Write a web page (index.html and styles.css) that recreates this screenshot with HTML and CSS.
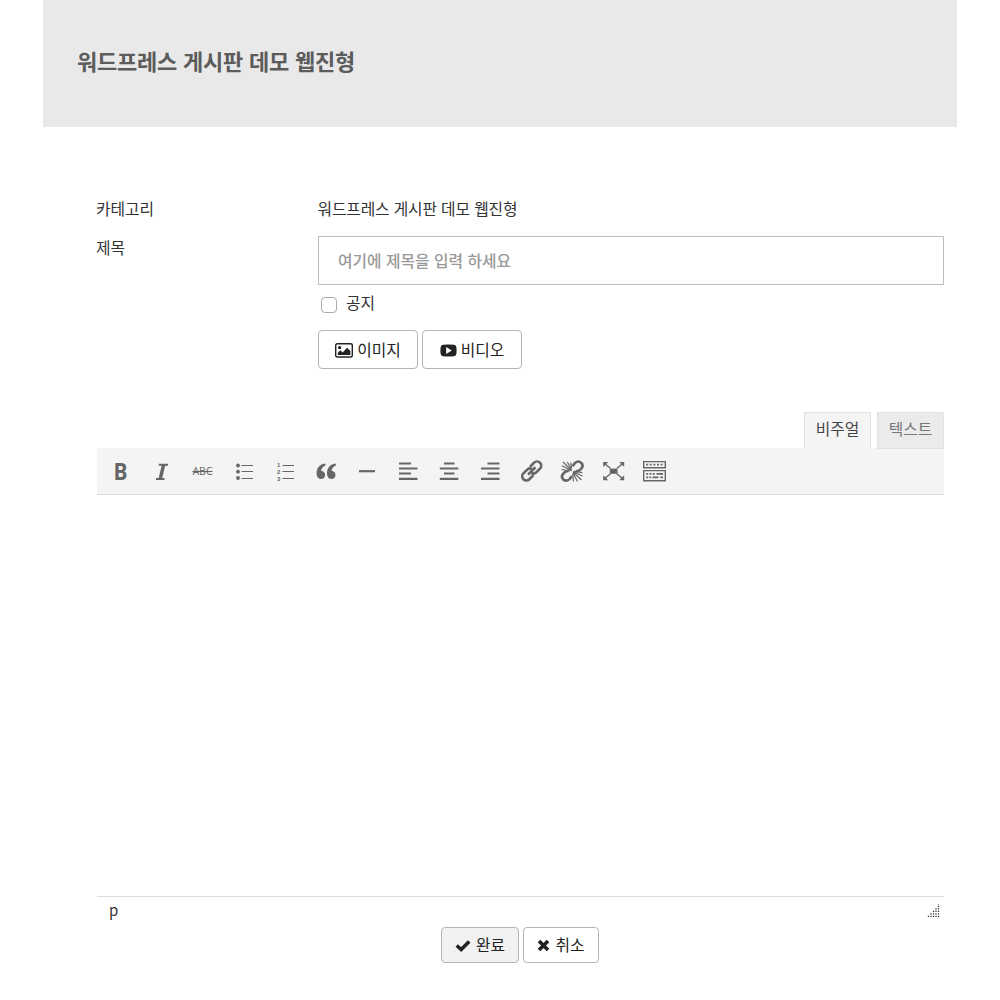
FILE: index.html
```
<!DOCTYPE html>
<html lang="ko">
<head>
<meta charset="utf-8">
<title>워드프레스 게시판 데모 웹진형</title>
<link rel="stylesheet" href="styles.css">
</head>
<body>
<header class="page-header"><h1>워드프레스 게시판 데모 웹진형</h1></header>
<main class="board">
  <div class="row category">
    <div class="label">카테고리</div>
    <div class="value">워드프레스 게시판 데모 웹진형</div>
  </div>
  <div class="row subject">
    <label class="label" for="title">제목</label>
    <div class="field">
      <input class="title-input" id="title" type="text" placeholder="여기에 제목을 입력 하세요">
      <label class="notice"><input class="check" type="checkbox"><span>공지</span></label>
      <div class="media">
        <button class="btn media-btn" type="button">
          <svg width="18" height="15" viewBox="0 0 18 15"><rect x=".7" y=".8" width="16.600" height="13.200" rx="1.500" fill="none" stroke="#222" stroke-width="1.400"/><circle cx="4.600" cy="4.600" r="1.700" fill="#222"/><path d="M2.800 12V9.800l2.600-2.500 2.200 2.100 4.500-4.600 3.300 3.300V12z" fill="#222"/></svg>
          <span>이미지</span>
        </button>
        <button class="btn media-btn video" type="button">
          <svg width="17" height="15" viewBox="0 0 17 15"><path d="M3 1.800q5.500-.7 11 0 2.200.2 2.400 2.400.4 3.300 0 6.600-.2 2.200-2.400 2.400-5.500.7-11 0Q.8 13 .6 10.800q-.4-3.300 0-6.600Q.8 2 3 1.800z" fill="#222"/><path d="M6.200 4v7l5.600-3.500z" fill="#fff"/></svg>
          <span>비디오</span>
        </button>
      </div>
    </div>
  </div>
  <section class="editor">
    <div class="tabs"><button class="tab active" type="button">비주얼</button><button class="tab" type="button">텍스트</button></div>
    <div class="toolbar">
      <svg class="tool" viewBox="0 0 26 26"><text class="bold" x="5.500" y="22" textLength="14" lengthAdjust="spacingAndGlyphs">B</text></svg>
      <svg class="tool" viewBox="0 0 26 26"><path d="M9.800 6.700h9.200M7 21h8.500" stroke="#666" stroke-width="2"/><path d="M14.700 6.500 11.200 21" stroke="#666" stroke-width="3.400"/></svg>
      <svg class="tool" viewBox="0 0 26 26"><text class="strike" x="2.500" y="17.300" textLength="20" lengthAdjust="spacingAndGlyphs">ABC</text><path class="thin" d="M2.500 13.500h20"/></svg>
      <svg class="tool" viewBox="0 0 26 26"><g fill="#666"><circle cx="7" cy="7.500" r="1.900"/><circle cx="7" cy="13.700" r="1.900"/><circle cx="7" cy="20" r="1.900"/></g><path class="thin" d="M10.500 7.500H22M10.500 13.500H22M10.500 20.500H22"/></svg>
      <svg class="tool" viewBox="0 0 26 26"><text class="nums" x="5" y="9">1</text><text class="nums" x="5" y="15.900">2</text><text class="nums" x="5" y="22.800">3</text><path class="thin" d="M10.500 7.500H22M10.500 13.500H22M10.500 20.500H22"/></svg>
      <svg class="tool" viewBox="0 0 26 26"><g fill="#666"><path d="M12.400 5.500C6.500 6.300 3.600 10 3.600 15.300c0 3.500 1.600 5.700 4.300 5.700 2.500 0 4.200-1.600 4.200-4.100 0-2.300-1.500-3.800-3.900-3.900.2-2.400 1.500-4.200 4.200-5.400z"/><path d="M22.800 5.500C16.900 6.300 14 10 14 15.300c0 3.500 1.600 5.700 4.300 5.700 2.500 0 4.200-1.600 4.200-4.100 0-2.300-1.500-3.800-3.900-3.900.2-2.400 1.500-4.200 4.200-5.400z"/></g></svg>
      <svg class="tool" viewBox="0 0 26 26"><path class="line" d="M5 13.200h16"/></svg>
      <svg class="tool" viewBox="0 0 26 26"><path class="line" d="M4 5.500h12M4 10.500h18.500M4 15.500h12M4 20.900h18.500"/></svg>
      <svg class="tool" viewBox="0 0 26 26"><path class="line" d="M8 5.500h10.500M3.800 10.500h18.500M8 15.500h10.500M3.800 20.900h18.500"/></svg>
      <svg class="tool" viewBox="0 0 26 26"><path class="line" d="M10.500 5.500h12M4 10.500h18.500M10.500 15.500h12M4 20.900h18.500"/></svg>
      <svg class="tool" viewBox="0 0 26 26"><g class="chain" transform="rotate(-45 13.700 13)"><path d="M12 17.200H6.200a4.200 4.200 0 0 1 0-8.400h5q3.500 0 4 3"/><path d="M15.400 8.800h5.800a4.200 4.200 0 0 1 0 8.400h-5q-3.500 0-4-3"/><path d="M8.500 13h10.500"/></g></svg>
      <svg class="tool" viewBox="0 0 26 26"><path class="chain" d="M13.500 8.200 15.800 5.200c4.500-4.200 10.200 1 6.300 5.600-1.200 1.500-3 2.700-5.200 2.500"/><path class="chain" d="M13 18.200l-2.500 2.900c-4.500 4.100-9.900-1.200-6-5.700 1.200-1.500 3-2.700 5.200-2.500"/><path class="rays" d="M12.500 12.800 3 7.800M12.800 12.500 4 4M12.500 11 8.300 4M12.500 10 11.800 4.500M11 13 2.700 11.500M14 13.500l9.500 4.500M14 14l8.500 8M14 15l4.500 8.500M13.700 16l.8 7.500M15 13.200l8.500 1.500"/></svg>
      <svg class="tool" viewBox="0 0 26 26"><rect x="9.800" y="10.600" width="7.700" height="5.200" fill="#666"/><path d="m4.500 5.500 6 5M22.800 5.500l-6 5M4.500 20.800l6-5M22.800 20.800l-6-5" stroke="#666" stroke-width="1.400"/><path d="M3.200 4h5l-5 5zM24.200 4h-5l5 5zM3.200 22.200h5l-5-5zM24.200 22.200h-5l5-5z" fill="#666"/></svg>
      <svg class="tool" viewBox="0 0 26 26"><path d="M2.700 3.600h21.600v6.200H2.700zM2.700 12.600h21.600v10.200H2.700z" fill="none" stroke="#666" stroke-width="1.400"/><path d="M5.200 6.700h17" stroke="#666" stroke-width="1.700" stroke-dasharray="2 1.600"/><path d="M5.200 15.900h9.500M5.200 19.400h5" stroke="#666" stroke-width="1.700" stroke-dasharray="2 1.300"/><path d="M15.500 15.900h6.500M11.500 19.400h6M19.300 19.400h2.700" stroke="#666" stroke-width="1.700"/></svg>
    </div>
    <div class="canvas" contenteditable="true"></div>
    <div class="statusbar"><span>p</span>
      <svg width="13" height="13" viewBox="0 0 13 13"><path d="M1.500 13v-2M4 13V8M6.500 13V6M9 13V3M11.500 13V0" stroke="#333" stroke-width="1.300" stroke-dasharray="1.300 1.200"/></svg>
    </div>
  </section>
  <div class="actions">
    <button class="btn submit" type="button"><svg width="16" height="13" viewBox="0 0 16 13"><path d="m1.700 6.500 4.500 4 8-8" fill="none" stroke="#222" stroke-width="3.500"/></svg><span>완료</span></button>
    <button class="btn cancel" type="button"><svg width="13" height="13" viewBox="0 0 13 13"><path d="m2 2 9 9M11 2l-9 9" stroke="#222" stroke-width="3.700"/></svg><span>취소</span></button>
  </div>
</main>
</body>
</html>
```
FILE: styles.css
```
* { box-sizing: border-box; }
body { margin: 0; background: #fff; color: #333; font: 15.8px/24px "Noto Sans CJK KR", sans-serif; }
button, input { font: inherit; color: inherit; margin: 0; }
svg { display: block; flex: none; }
.page-header { height: 127px; margin: 0 43px; padding: 43px 34px 0; background: #e9e9e9; }
h1 { margin: 0; font-size: 22px; line-height: 34px; font-weight: 700; letter-spacing: -.22px; color: #5c5c5c; }
.board { margin: 0 56px 0 97px; padding-top: 70px; }
.row { display: grid; grid-template-columns: 221px 1fr; }
.category { height: 39px; }
.label, .value { height: 24px; }
.label { margin-left: -1px; }
.value { margin-left: -.5px; letter-spacing: -.15px; }
.title-input { display: block; width: 100%; height: 49px; padding: 0 19px; border: 1px solid #bebebe; outline: 0; }
.title-input::placeholder { color: #999; opacity: 1; font-weight: 500; }
.notice { display: flex; height: 24px; margin: 6px 0 15px 3px; gap: 9px; }
.check { appearance: none; width: 16px; height: 16px; margin-top: 6px; border: 1px solid #aaa; border-radius: 4px; }
.media { display: flex; gap: 4px; }
.btn { display: flex; align-items: center; justify-content: center; padding: 0; border: 1px solid #b5b5b5; border-radius: 4px; background: #fff; color: #222; }
.media-btn { width: 100px; height: 39px; gap: 4px; }
.media-btn svg { margin-top: 2px; }
.editor { margin-top: 43px; }
.tabs { display: flex; justify-content: flex-end; gap: 6px; height: 36px; }
.tab { width: 67px; height: 37px; padding: 0 0 4px; border: 1px solid #e1e1e1; background: #ebebeb; color: #777; }
.tab.active { padding-bottom: 5px; background: #f4f4f4; color: #444; border-bottom: 0; }
.toolbar { display: flex; gap: 15px; height: 47px; padding: 10px 11px 0; background: #f4f4f4; border-bottom: 1px solid #d9d9d9; }
.tool { width: 26px; height: 26px; overflow: visible; }
.tool text { fill: #666; }
.tool .bold { font: 700 23px "Open Sans", sans-serif; }
.tool .strike { font: 11.5px "Open Sans", sans-serif; }
.tool .nums { font: 700 6px "Liberation Sans", sans-serif; }
.thin { fill: none; stroke: #666; stroke-width: 1.2; }
.line { fill: none; stroke: #666; stroke-width: 2.2; }
.chain { fill: none; stroke: #666; stroke-width: 2.6; }
.rays { fill: none; stroke: #666; stroke-width: 1.2; }
.canvas { height: 401px; outline: 0; }
.statusbar { display: flex; justify-content: space-between; height: 31px; padding: 1px 4px 0 12px; border-top: 1px solid #ddd; font-size: 15px; }
.statusbar svg { margin-top: 6px; }
.actions { display: flex; gap: 4px; margin-left: 344px; }
.submit, .cancel { height: 36px; gap: 5px; }
.submit { width: 78px; background: #f1f1f1; }
.cancel { width: 76px; }
```
